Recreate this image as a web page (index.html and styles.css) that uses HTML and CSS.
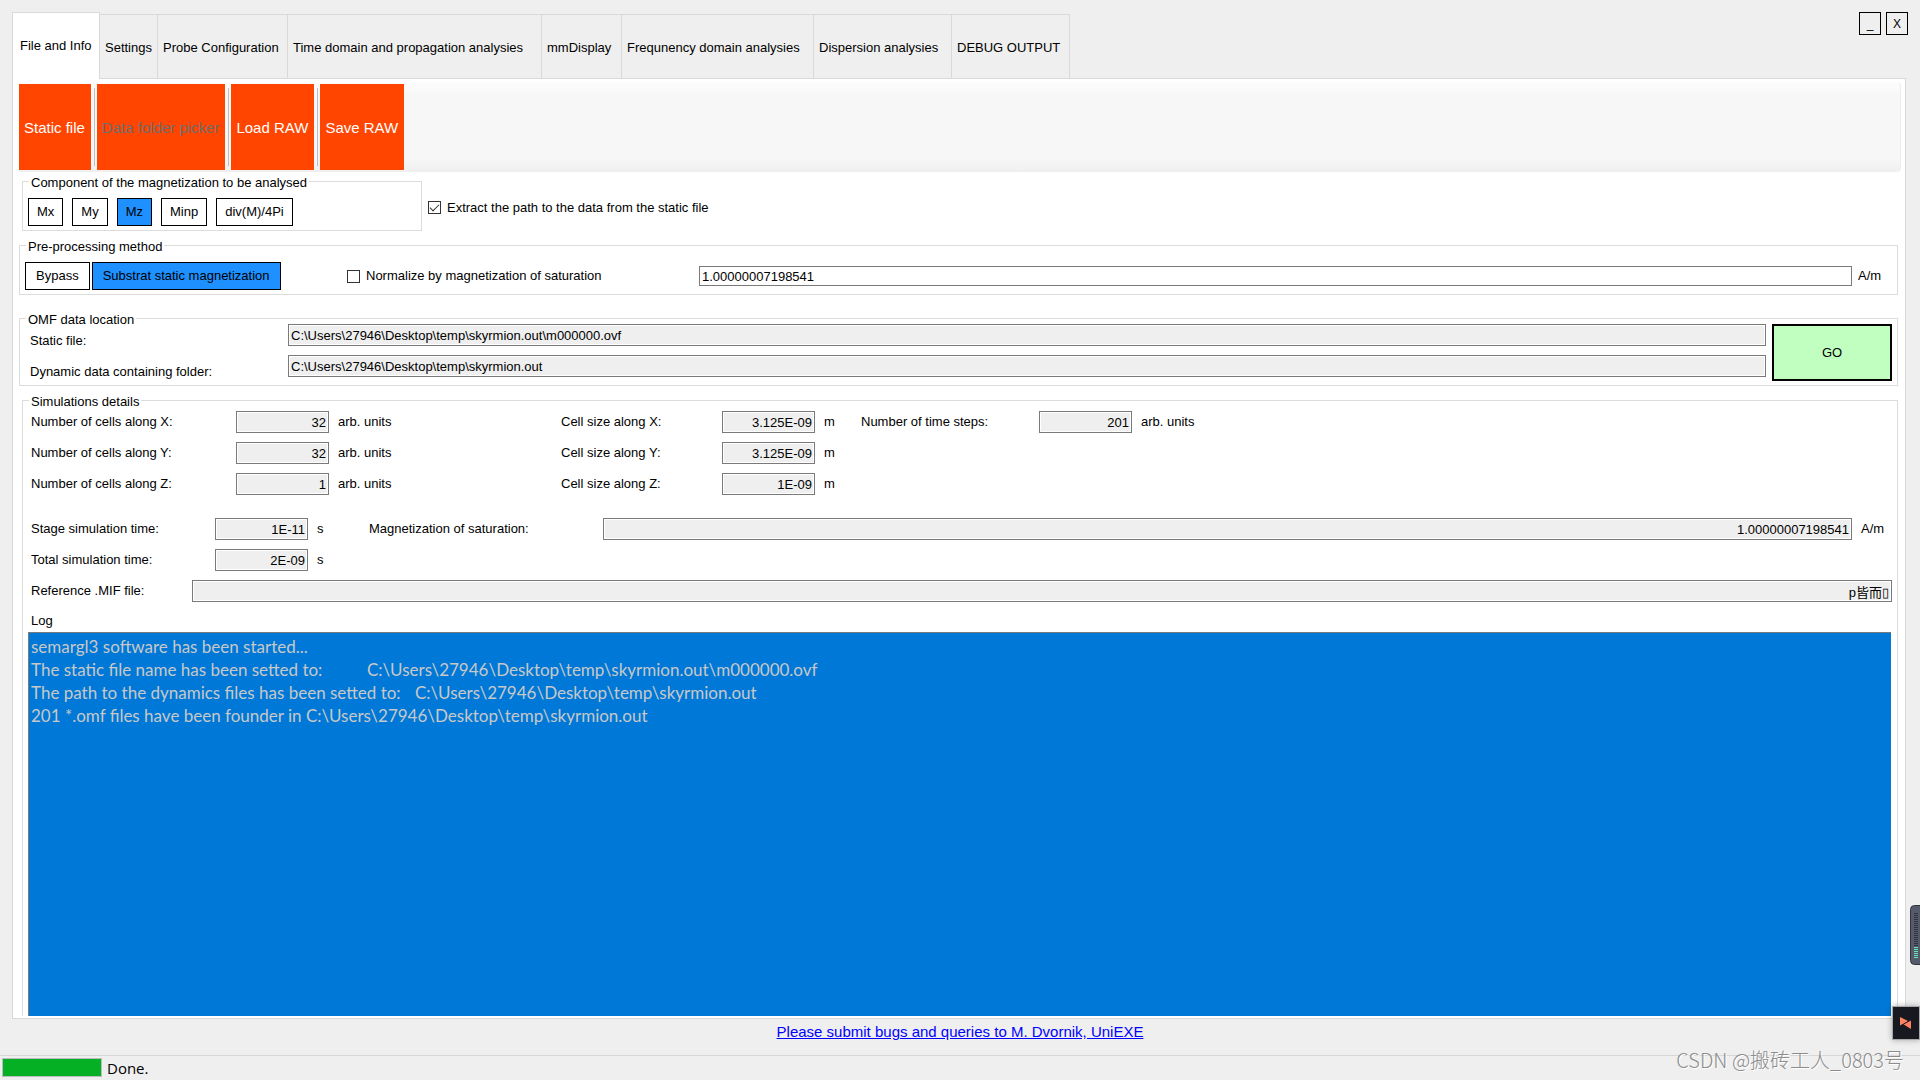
FILE: index.html
```html
<!DOCTYPE html>
<html lang="en">
<head>
<meta charset="utf-8">
<title>semargl3</title>
<link rel="stylesheet" href="styles.css">
</head>
<body>
<div class="window">
  <header class="titlebar">
    <nav class="tabs" role="tablist">
      <button class="tab tab-active" role="tab" aria-selected="true">File and Info</button>
      <button class="tab" role="tab">Settings</button>
      <button class="tab" role="tab">Probe Configuration</button>
      <button class="tab" role="tab">Time domain and propagation analysies</button>
      <button class="tab" role="tab">mmDisplay</button>
      <button class="tab" role="tab">Frequnency domain analysies</button>
      <button class="tab" role="tab">Dispersion analysies</button>
      <button class="tab" role="tab">DEBUG OUTPUT</button>
    </nav>
    <div class="window-controls">
      <button class="window-btn" aria-label="Minimize">_</button>
      <button class="window-btn" aria-label="Close">X</button>
    </div>
  </header>

  <main class="panel">
    <div class="toolbar">
      <button class="tool">Static file</button>
      <span class="tool-sep"></span>
      <button class="tool" disabled>Data folder picker</button>
      <span class="tool-sep"></span>
      <button class="tool">Load RAW</button>
      <span class="tool-sep"></span>
      <button class="tool">Save RAW</button>
    </div>

    <div class="component-row">
      <fieldset class="group group-component">
        <legend>Component of the magnetization to be analysed</legend>
        <div class="choices choices-wide">
          <button class="choice">Mx</button>
          <button class="choice">My</button>
          <button class="choice choice-on" aria-pressed="true">Mz</button>
          <button class="choice">Minp</button>
          <button class="choice">div(M)/4Pi</button>
        </div>
      </fieldset>
      <label class="check"><input type="checkbox" checked>Extract the path to the data from the static file</label>
    </div>

    <fieldset class="group group-method">
      <legend>Pre-processing method</legend>
      <div class="method-row">
        <div class="choices">
          <button class="choice">Bypass</button>
          <button class="choice choice-on" aria-pressed="true">Substrat static magnetization</button>
        </div>
        <label class="check"><input type="checkbox">Normalize by magnetization of saturation</label>
        <input class="field field-edit" type="text" value="1.00000007198541" aria-label="Magnetization of saturation, A/m">
        <span>A/m</span>
      </div>
    </fieldset>

    <fieldset class="group group-location">
      <legend>OMF data location</legend>
      <div class="location-row">
        <div class="location-grid">
          <label for="static-file">Static file:</label>
          <input class="field" id="static-file" type="text" readonly value="C:\Users\27946\Desktop\temp\skyrmion.out\m000000.ovf">
          <label for="data-folder">Dynamic data containing folder:</label>
          <input class="field" id="data-folder" type="text" readonly value="C:\Users\27946\Desktop\temp\skyrmion.out">
        </div>
        <button class="go">GO</button>
      </div>
    </fieldset>

    <fieldset class="group group-details">
      <legend>Simulations details</legend>
      <div class="details">
        <div class="cells">
          <label for="nx">Number of cells along X:</label>
          <input class="field field-num" id="nx" type="text" readonly value="32">
          <span>arb. units</span>
          <label for="dx">Cell size along X:</label>
          <input class="field field-num" id="dx" type="text" readonly value="3.125E-09">
          <span>m</span>
          <label for="steps">Number of time steps:</label>
          <input class="field field-num" id="steps" type="text" readonly value="201">
          <span>arb. units</span>

          <label class="row-start" for="ny">Number of cells along Y:</label>
          <input class="field field-num" id="ny" type="text" readonly value="32">
          <span>arb. units</span>
          <label for="dy">Cell size along Y:</label>
          <input class="field field-num" id="dy" type="text" readonly value="3.125E-09">
          <span>m</span>

          <label class="row-start" for="nz">Number of cells along Z:</label>
          <input class="field field-num" id="nz" type="text" readonly value="1">
          <span>arb. units</span>
          <label for="dz">Cell size along Z:</label>
          <input class="field field-num" id="dz" type="text" readonly value="1E-09">
          <span>m</span>
        </div>

        <div class="times">
          <label for="stage">Stage simulation time:</label>
          <input class="field field-num" id="stage" type="text" readonly value="1E-11">
          <span>s</span>
          <label for="ms">Magnetization of saturation:</label>
          <input class="field field-num" id="ms" type="text" readonly value="1.00000007198541">
          <span>A/m</span>

          <label class="row-start" for="total">Total simulation time:</label>
          <input class="field field-num" id="total" type="text" readonly value="2E-09">
          <span>s</span>
        </div>

        <div class="mif">
          <label for="mif">Reference .MIF file:</label>
          <input class="field field-num" id="mif" type="text" readonly value="p皆而▯">
        </div>

        <label class="log-label" for="log">Log</label>
        <textarea class="log" id="log" readonly>semargl3 software has been started...
The static file name has been setted to:	C:\Users\27946\Desktop\temp\skyrmion.out\m000000.ovf
The path to the dynamics files has been setted to:	C:\Users\27946\Desktop\temp\skyrmion.out
201 *.omf files have been founder in C:\Users\27946\Desktop\temp\skyrmion.out</textarea>
      </div>
    </fieldset>
  </main>

  <div class="contact"><a href="#">Please submit bugs and queries to M. Dvornik, UniEXE</a></div>

  <footer class="status">
    <div class="progress" role="progressbar" aria-label="Progress" aria-valuenow="100"></div>
    <span>Done.</span>
  </footer>

  <svg class="meter" width="10" height="60" viewBox="0 0 10 60" aria-hidden="true">
    <rect x="0.5" y="0.5" width="14" height="59" rx="4" fill="#555b6b" stroke="#30343f"/>
    <path d="M6 8V42" stroke="#30333d" stroke-width="4" stroke-dasharray="1 1"/>
    <path d="M6 42V54" stroke="#62e8b4" stroke-width="4" stroke-dasharray="1 1"/>
  </svg>
  <svg class="capture" width="28" height="34" viewBox="0 0 28 34" aria-hidden="true">
    <rect x="0.5" y="0.5" width="27" height="33" fill="#181820" stroke="#a8a8a8"/>
    <path d="M8 11L16 15L8 20ZM19 14V23L11 18Z" fill="#ff8262"/>
    <path d="M8 20L19 14" stroke="#181820"/>
  </svg>
  <div class="watermark">CSDN @搬砖工人_0803号</div>
</div>
</body>
</html>
```
FILE: styles.css
```css
* {
  box-sizing: border-box;
}

body {
  margin: 0;
  background: #efefef;
  color: #000;
  font: 13px/16px "Liberation Sans", "Noto Sans CJK SC", sans-serif;
}

button,
input,
textarea {
  margin: 0;
  border-radius: 0;
  color: inherit;
  font: inherit;
}

.window {
  position: relative;
  display: flex;
  flex-direction: column;
  min-height: 100vh;
  overflow: hidden;
}

/* Tab strip and window buttons */

.titlebar {
  display: flex;
  justify-content: space-between;
  align-items: flex-start;
  padding: 12px 12px 0;
}

.tabs {
  display: grid;
  grid-template-columns: 88px 58px 130px 254px 80px 192px 138px 118px;
  align-items: end;
}

.tab {
  height: 64px;
  padding: 2px 0 0 5px;
  border: 1px solid #d9d9d9;
  border-width: 1px 1px 0 0;
  background: #efefef;
  text-align: left;
  white-space: nowrap;
}

.tab-active {
  position: relative;
  height: 67px;
  margin-bottom: -1px;
  padding: 0 0 1px 7px;
  border-left-width: 1px;
  background: #fff;
}

.window-controls {
  display: flex;
  gap: 5px;
}

.window-btn {
  width: 22px;
  height: 23px;
  padding: 0;
  border: 1px solid #000;
  background: #efefef;
  font-size: 12px;
}

/* Main panel */

.panel {
  flex: 1;
  display: flex;
  flex-direction: column;
  margin: 0 14px 0 12px;
  padding: 3px 0 2px;
  border: 1px solid #d9d9d9;
  background: #fff;
}

.toolbar {
  display: flex;
  height: 90px;
  margin: 0 4px 0 6px;
  padding: 2px 0;
  border-right: 1px solid #ececec;
  border-radius: 0 4px 4px 0;
  background: linear-gradient(#fdfdfd, #f7f7f7 15%, #f7f7f7 85%, #efefef);
}

.tool {
  padding: 2px 6px 0 5px;
  border: 0;
  background: #ff4500;
  color: #fff;
  font-size: 15px;
}

.tool:disabled {
  color: #6d6d6d;
}

.tool-sep {
  width: 1px;
  margin: 4px 2px 4px 3px;
  background: #bdbdbd;
}

.group {
  min-width: 0;
  margin: 0 7px 0 6px;
  padding: 0;
  border: 1px solid #dcdcdc;
}

.group legend {
  height: 12px;
  margin-left: 6px;
  padding: 0 2px;
}

.component-row {
  display: flex;
  align-items: center;
  gap: 6px;
  margin-top: 3px;
}

.component-row .check {
  padding-top: 9px;
}

.group-component {
  width: 400px;
  height: 56px;
  margin: 0 0 0 9px;
  padding: 11px 5px 0;
}

.group-component legend {
  margin-left: 1px;
}

.choices {
  display: flex;
  gap: 2px;
}

.choices-wide {
  gap: 9px;
}

.choice {
  height: 28px;
  padding: 0 10px;
  border: 1px solid #000;
  background: #fff;
}

.choices-wide .choice {
  padding: 0 8px;
}

.choice-on {
  background: #1e90ff;
}

.check {
  display: flex;
  align-items: center;
  gap: 6px;
}

.check input {
  appearance: none;
  width: 13px;
  height: 13px;
  border: 1px solid #333;
  background: #fff;
}

.check input:checked::before {
  content: "";
  display: block;
  width: 8px;
  height: 4px;
  margin: 2px 0 0 1px;
  border: solid #333;
  border-width: 0 0 1px 1px;
  transform: rotate(-45deg);
}

.group-method {
  height: 56px;
  margin-top: 8px;
  padding: 11px 5px 0;
}

.group-method legend {
  margin-left: 1px;
}

.method-row {
  display: grid;
  grid-template-columns: 316px 346px 1fr 35px;
  align-items: center;
  column-gap: 6px;
  margin-right: -1px;
}

.field {
  width: 100%;
  height: 22px;
  padding: 0 2px;
  border: 1px solid #7a7a7a;
  outline: 0;
  background: #efefef;
  box-shadow: inset 0 0 0 1px #fff;
}

.field-edit {
  height: 20px;
  background: #fff;
}

.field-num {
  text-align: right;
}

.group-location {
  height: 74px;
  margin-top: 17px;
}

.location-row {
  display: flex;
  gap: 6px;
  padding: 0 5px 0 10px;
}

.location-grid {
  flex: 1;
  display: grid;
  grid-template-columns: 258px 1fr;
  grid-auto-rows: 22px;
  row-gap: 9px;
}

.location-grid label {
  padding-top: 9px;
}

.go {
  width: 120px;
  height: 57px;
  border: 2px solid #000;
  background: #c0ffc0;
}

.group-details {
  flex: 1;
  margin: 8px 7px 0 9px;
  border-bottom: 0;
}

.details {
  display: flex;
  flex-direction: column;
  padding: 5px 5px 0;
}

.cells,
.times,
.mif {
  display: grid;
  grid-auto-rows: 22px;
  row-gap: 9px;
  align-items: center;
  padding-left: 3px;
}

.cells span,
.times span {
  padding-left: 9px;
}

.row-start {
  grid-column: 1;
}

.cells {
  grid-template-columns: 205px 93px 232px 161px 93px 46px 178px 93px 1fr;
}

.times {
  grid-template-columns: 184px 93px 61px 234px 1fr 40px;
  margin-top: 23px;
}

.mif {
  grid-template-columns: 161px 1fr;
  margin-top: 9px;
}

.log-label {
  margin-top: 11px;
  padding-left: 3px;
}

/* The log takes the window height left by the bars and groups round it */
.log {
  display: block;
  height: calc(100vh - 696px);
  min-height: 120px;
  margin: 3px 1px 0 0;
  padding: 2px;
  border: 1px solid #7a7a7a;
  border-width: 1px 0 0 1px;
  outline: 0;
  resize: none;
  background: #0078d7;
  color: #c8c8c8;
  font: 17px/23px Lato, sans-serif;
  tab-size: 48px;
}

/* Footer */

.contact {
  padding: 4px 0 15px;
  text-align: center;
  font-size: 15px;
  line-height: 17px;
}

.contact a {
  color: #00f;
}

.status {
  display: flex;
  align-items: flex-start;
  gap: 5px;
  height: 25px;
  padding: 2px;
  border-top: 1px solid #d7d7d7;
  font: 15px/20px "Open Sans", sans-serif;
}

.progress {
  width: 100px;
  height: 19px;
  border: 1px solid #bcbcbc;
  background: #06b025;
}

/* Desktop overlays */

.meter {
  position: absolute;
  right: 0;
  bottom: 115px;
}

.capture {
  position: absolute;
  right: 0;
  bottom: 40px;
  box-shadow: 0 0 6px rgba(0, 0, 0, 0.3);
}

.watermark {
  position: absolute;
  right: 16px;
  bottom: 6px;
  color: #8c8c8c;
  font: 300 20px/28px "Noto Sans CJK SC", sans-serif;
  text-shadow: 1px 1px 0 #fff;
}
```
